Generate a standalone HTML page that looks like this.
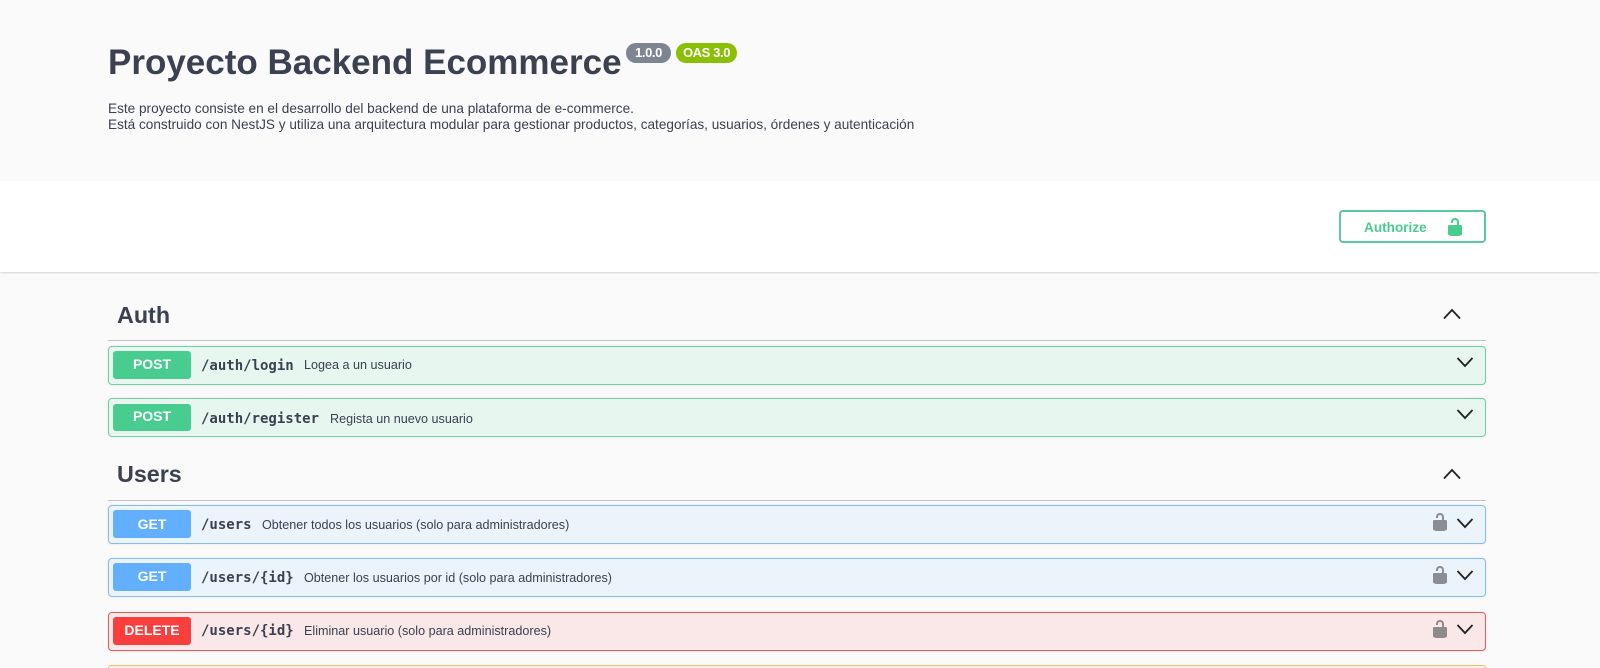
<!DOCTYPE html>
<html><head><meta charset="utf-8"><title>Proyecto Backend Ecommerce</title>
<style>
*{box-sizing:border-box}
html,body{margin:0;padding:0;width:1600px;height:668px;overflow:hidden;background:#fafafa}
#w{position:absolute;left:0;top:0;width:1600px;height:668px;overflow:hidden;background:#fafafa;font-family:"Liberation Sans",sans-serif;color:#3b4151;filter:blur(.35px)}
.a{position:absolute;white-space:nowrap}
.bar{left:0;top:181px;width:1600px;height:91px;background:#fff;box-shadow:0 1px 2px rgba(0,0,0,.15)}
h1{margin:0;left:108px;top:42px;font-size:35px;line-height:42px;font-weight:700;color:#3b4151}
.pill{height:20px;border-radius:10px;color:#fff;font-weight:700;font-size:13px;letter-spacing:-.4px;line-height:20px;text-align:center}
.desc{left:108px;top:101px;font-size:13.6px;line-height:15.7px;color:#3b4151}
.auth{left:1339px;top:210px;width:147px;height:33px;border:2px solid #5cc9a0;border-radius:4px;background:#fff}
.auth span{position:absolute;left:23px;top:7px;font-size:13.6px;line-height:17px;font-weight:700;color:#49cc90}
.tag{left:117px;font-size:23.3px;line-height:28px;font-weight:700;color:#3b4151}
.rule{left:108px;width:1378px;height:1px;background:rgba(59,65,81,.3)}
.op{left:108px;width:1378px;height:39px;border:1px solid;border-radius:4px;box-shadow:0 0 3px rgba(0,0,0,.08)}
.post{background:#e8f6f0;border-color:#6fd0a6}
.get{background:#ebf3fb;border-color:#85bdf0}
.del{background:#fae7e7;border-color:#e65a5c}
.put{height:3px;background:#fbf1e6;border-color:#fcb86a;border-bottom:0;border-radius:4px 4px 0 0;box-shadow:none}
.m{position:absolute;left:4px;top:4px;width:78px;height:28px;border-radius:3px;color:#fff;font-size:14px;line-height:26px;font-weight:700;text-align:center}
.post .m{background:#49cc90}.get .m{background:#61affe}.del .m{background:#f93e3e}
.p{position:absolute;left:92px;top:9px;font-family:"DejaVu Sans Mono",monospace;font-weight:700;font-size:14px;line-height:18px;color:#3b4151;white-space:nowrap}
.d{position:absolute;top:10px;font-size:12.6px;line-height:16px;color:#3b4151;white-space:nowrap}
svg{position:absolute;display:block}
.lo{left:1321px;top:6px}
.ch{left:1347px;top:10px}
</style></head><body><div id="w">
<h1 class="a">Proyecto Backend Ecommerce</h1>
<div class="a pill" style="left:626px;top:43px;width:45px;background:#7d8492">1.0.0</div>
<div class="a pill" style="left:676px;top:43px;width:61px;background:#89bf04">OAS 3.0</div>
<div class="a desc">Este proyecto consiste en el desarrollo del backend de una plataforma de e-commerce.<br>Está construido con NestJS y utiliza una arquitectura modular para gestionar productos, categorías, usuarios, órdenes y autenticación</div>
<div class="a bar"></div>
<div class="a auth"><span>Authorize</span>
<svg style="left:104px;top:5px" width="20" height="20" viewBox="0 0 20 20"><path fill="#49cc90" d="M15.8 8H14V5.600C14 2.703 12.665 1 10 1 7.334 1 6 2.703 6 5.600V6h2v-.801C8 3.754 8.797 3 10 3c1.203 0 2 .754 2 2.199V8H4c-.553 0-1 .646-1 1.199V17c0 .549.428 1.139.951 1.307l1.197.387C5.672 18.861 6.550 19 7.100 19h5.800c.549 0 1.428-.139 1.951-.307l1.196-.387c.524-.167.953-.757.953-1.306V9.199C17 8.646 16.352 8 15.800 8z"/></svg></div>

<div class="a tag" style="top:301px">Auth</div>
<svg class="a" style="left:1442px;top:307px" width="20" height="14" viewBox="0 0 20 14"><path d="M2 11.500L10 3L18 11.500" fill="none" stroke="#222" stroke-width="1.800"/></svg>
<div class="a rule" style="top:340px"></div>

<div class="a op post" style="top:346px"><div class="m">POST</div><div class="p" style="top:10px">/auth/login</div><div class="d" style="left:195px">Logea a un usuario</div>
<svg style="left:1347px;top:9px" width="20" height="14" viewBox="0 0 20 14"><path d="M1.500 2L9 10L16.500 2" fill="none" stroke="#222" stroke-width="1.800"/></svg></div>

<div class="a op post" style="top:398px"><div class="m" style="top:5px;height:27px;line-height:24px">POST</div><div class="p" style="top:11px">/auth/register</div><div class="d" style="left:221px;top:12px">Regista un nuevo usuario</div>
<svg style="left:1347px;top:9px" width="20" height="14" viewBox="0 0 20 14"><path d="M1.500 2L9 10L16.500 2" fill="none" stroke="#222" stroke-width="1.800"/></svg></div>

<div class="a tag" style="top:460px">Users</div>
<svg class="a" style="left:1442px;top:467px" width="20" height="14" viewBox="0 0 20 14"><path d="M2 11.500L10 3L18 11.500" fill="none" stroke="#222" stroke-width="1.800"/></svg>
<div class="a rule" style="top:500px"></div>

<div class="a op get" style="top:505px"><div class="m" style="line-height:28px">GET</div><div class="p" style="top:10px">/users</div><div class="d" style="left:153px;top:11px">Obtener todos los usuarios (solo para administradores)</div>
<svg class="lo" width="20" height="20" viewBox="0 0 20 20"><path fill="#8a8d96" d="M15.8 8H14V5.600C14 2.703 12.665 1 10 1 7.334 1 6 2.703 6 5.600V6h2v-.801C8 3.754 8.797 3 10 3c1.203 0 2 .754 2 2.199V8H4c-.553 0-1 .646-1 1.199V17c0 .549.428 1.139.951 1.307l1.197.387C5.672 18.861 6.550 19 7.100 19h5.800c.549 0 1.428-.139 1.951-.307l1.196-.387c.524-.167.953-.757.953-1.306V9.199C17 8.646 16.352 8 15.800 8z"/></svg>
<svg class="ch" style="top:11px" width="20" height="14" viewBox="0 0 20 14"><path d="M1.500 2L9 10L16.500 2" fill="none" stroke="#222" stroke-width="1.800"/></svg></div>

<div class="a op get" style="top:558px"><div class="m">GET</div><div class="p" style="top:10px">/users/{id}</div><div class="d" style="left:195px;top:11px">Obtener los usuarios por id (solo para administradores)</div>
<svg class="lo" width="20" height="20" viewBox="0 0 20 20"><path fill="#8a8d96" d="M15.8 8H14V5.600C14 2.703 12.665 1 10 1 7.334 1 6 2.703 6 5.600V6h2v-.801C8 3.754 8.797 3 10 3c1.203 0 2 .754 2 2.199V8H4c-.553 0-1 .646-1 1.199V17c0 .549.428 1.139.951 1.307l1.197.387C5.672 18.861 6.550 19 7.100 19h5.800c.549 0 1.428-.139 1.951-.307l1.196-.387c.524-.167.953-.757.953-1.306V9.199C17 8.646 16.352 8 15.800 8z"/></svg>
<svg class="ch" width="20" height="14" viewBox="0 0 20 14"><path d="M1.500 2L9 10L16.500 2" fill="none" stroke="#222" stroke-width="1.800"/></svg></div>

<div class="a op del" style="top:612px"><div class="m">DELETE</div><div class="p">/users/{id}</div><div class="d" style="left:195px">Eliminar usuario (solo para administradores)</div>
<svg class="lo" width="20" height="20" viewBox="0 0 20 20"><path fill="#8f8a8c" d="M15.8 8H14V5.600C14 2.703 12.665 1 10 1 7.334 1 6 2.703 6 5.600V6h2v-.801C8 3.754 8.797 3 10 3c1.203 0 2 .754 2 2.199V8H4c-.553 0-1 .646-1 1.199V17c0 .549.428 1.139.951 1.307l1.197.387C5.672 18.861 6.550 19 7.100 19h5.800c.549 0 1.428-.139 1.951-.307l1.196-.387c.524-.167.953-.757.953-1.306V9.199C17 8.646 16.352 8 15.800 8z"/></svg>
<svg class="ch" width="20" height="14" viewBox="0 0 20 14"><path d="M1.500 2L9 10L16.500 2" fill="none" stroke="#222" stroke-width="1.800"/></svg></div>

<div class="a op put" style="top:665px"></div>
</div></body></html>
